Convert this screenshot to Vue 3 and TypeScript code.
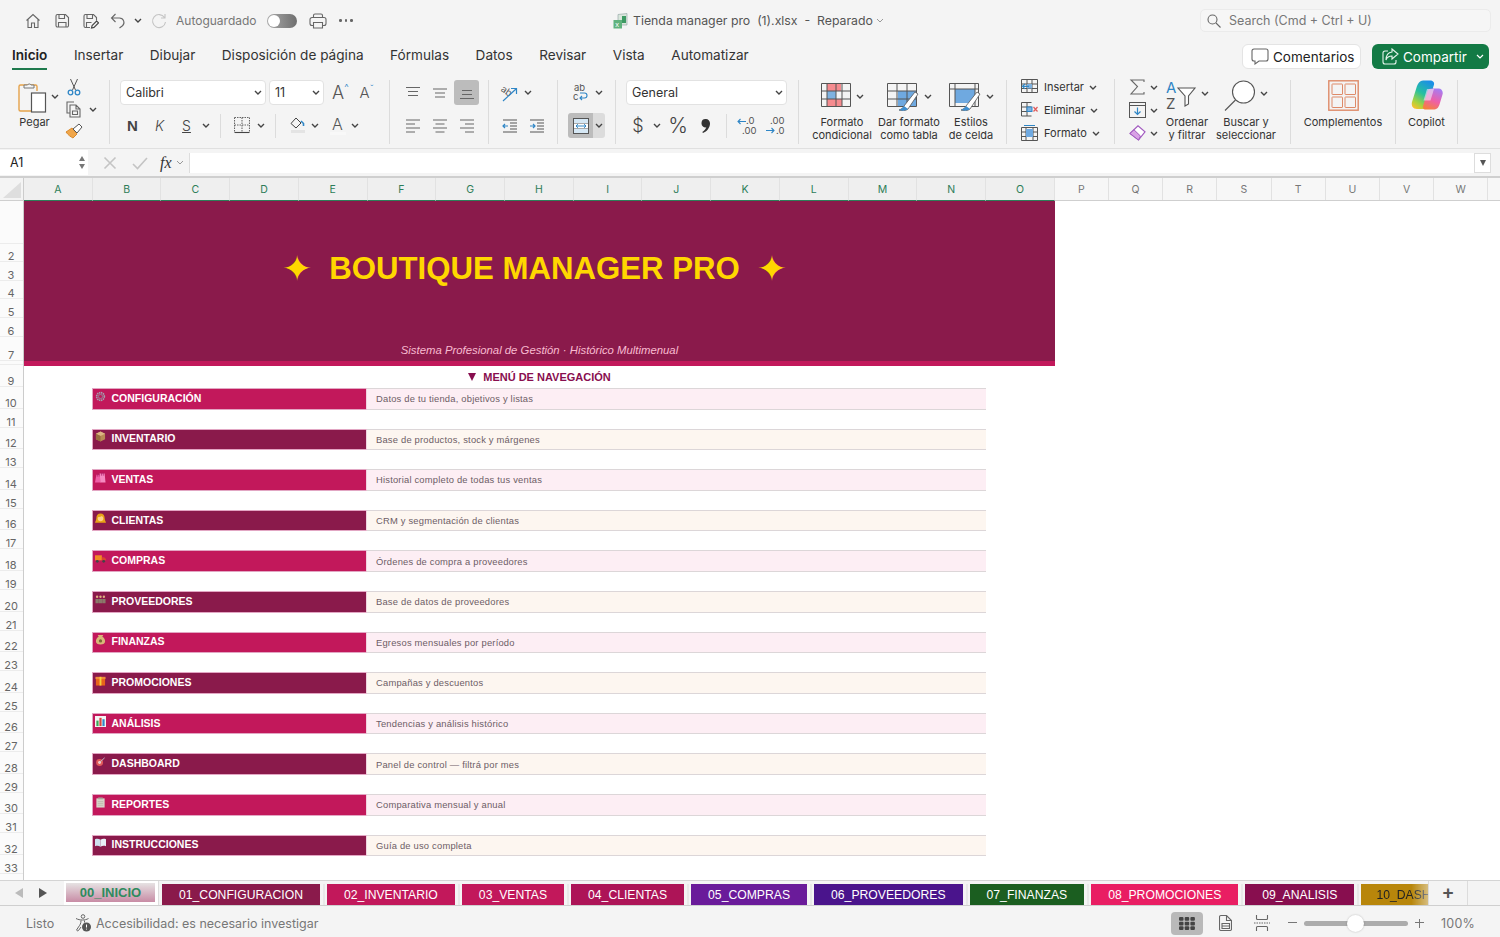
<template>
  <div class="app">
    <svg class="defs" width="0" height="0">
      <symbol id="chev" viewBox="0 0 8 5"><path d="M1 1l3 3 3-3" /></symbol>
    </svg>

    <!-- barra de título -->
    <div class="titlebar">
      <div class="qa">
        <svg class="ico home" width="16" height="16" viewBox="0 0 16 16"><path d="M1.500 7.500L8 1.500l6.500 6M3 6.500V14.500h3.500V10h3v4.500H13V6.500" /></svg>
        <svg class="ico sv" width="16" height="16" viewBox="0 0 16 16"><path d="M2 3a1.500 1.500 0 0 1 1.500-1.500h8L14.500 4.500v8a1.500 1.500 0 0 1-1.500 1.500H3.500A1.500 1.500 0 0 1 2 12.500zM5 2v3.500h5.500V2M4.500 14V9.500h7.500V14" /></svg>
        <svg class="ico sv2" width="17" height="16" viewBox="0 0 17 16"><path d="M2 3a1.500 1.500 0 0 1 1.500-1.500h8L14.500 4.500v3M8 14.500H3.500A1.500 1.500 0 0 1 2 13V3M5 2v3.500h5.500V2M4.500 14V9.500h5" /><path class="dark" d="M9.500 15l.6-2.500 4.500-4.500 1.900 1.900-4.500 4.500z" /></svg>
        <svg class="ico undo" width="16" height="16" viewBox="0 0 16 16"><path d="M5.500 1L1.500 5l4 4M1.500 5H9.500a4.500 4.500 0 0 1 3 7.800l-3 2.200" /></svg>
        <svg class="chev ch-undo"><use href="#chev" /></svg>
        <svg class="ico redo" width="16" height="16" viewBox="0 0 16 16"><path d="M13.500 4.500A6.500 6.500 0 1 0 14.500 9M14 1v4h-4" /></svg>
        <span class="autosave">Autoguardado</span>
        <span class="toggle"><i></i></span>
        <svg class="ico print" width="18" height="16" viewBox="0 0 18 16"><path d="M4.500 4.500V2.500a1.500 1.500 0 0 1 1.500-1.500h6a1.500 1.500 0 0 1 1.500 1.500v2M4.500 12.500H3A2 2 0 0 1 1 10.500V6.500a2 2 0 0 1 2-2h12a2 2 0 0 1 2 2v4a2 2 0 0 1-2 2h-1.500M4.500 9.500h9V15h-9z" /></svg>
        <span class="dots"><i></i><i></i><i></i></span>
      </div>
      <div class="doc">
        <svg class="xl" width="16" height="16" viewBox="0 0 16 16"><path d="M5 1.500l9-1v11.500H5z" fill="#d9e7dc" stroke="#9aa" stroke-width=".7" /><rect x="9" y="3" width="4" height="7" fill="#3d9a63" /><rect x="0.500" y="7" width="8.500" height="8.500" fill="#5fb27d" /><text x="2.300" y="14" font-size="7.500" fill="#fff" font-family="Liberation Sans">x</text></svg>
        <span class="doc-name">{{ docName }}</span>
        <svg class="chev light"><use href="#chev" /></svg>
      </div>
      <div class="search">
        <svg class="ico" width="14" height="14" viewBox="0 0 14 14"><circle cx="5.500" cy="5.500" r="4.500" /><path d="M9 9l4.500 4.500" /></svg>
        <span>Search (Cmd + Ctrl + U)</span>
      </div>
    </div>

    <!-- pestañas -->
    <div class="menubar">
      <span v-for="(t, i) in ribbonTabs" :key="t" class="mtab" :class="{ on: i === 0 }">{{ t }}</span>
      <div class="actions">
        <button class="btn-com">
          <svg class="ico" width="18" height="17" viewBox="0 0 18 17"><path d="M3 1h12a2 2 0 0 1 2 2v8a2 2 0 0 1-2 2H8l-4 3v-3H3a2 2 0 0 1-2-2V3a2 2 0 0 1 2-2z" /></svg>
          Comentarios
        </button>
        <button class="btn-share">
          <svg class="ico" width="17" height="17" viewBox="0 0 17 17"><path d="M6 3H3a2 2 0 0 0-2 2v9a2 2 0 0 0 2 2h9a2 2 0 0 0 2-2v-2M10 1l6 5-6 5V8C7 8 5 9 4 12c0-5 2-7.500 6-8z" /></svg>
          Compartir
          <svg class="chev white"><use href="#chev" /></svg>
        </button>
      </div>
    </div>

    <!-- cinta -->
    <div class="ribbon">
      <div class="grp g-clip">
        <div class="paste">
          <div class="paste-top">
            <svg width="30" height="32" viewBox="0 0 30 32" fill="none"><path d="M8 4H3.500A1.500 1.500 0 0 0 2 5.500v23A1.500 1.500 0 0 0 3.500 30H14" stroke="#e5a24a" stroke-width="1.400" /><path d="M8 4h10.500A1.500 1.500 0 0 1 20 5.500V10" stroke="#e5a24a" stroke-width="1.400" /><path d="M7 7V4h3.500a2 2 0 0 1 3.500 0H17v3z" fill="#f4f4f4" stroke="#777" /><rect x="14.500" y="12" width="14" height="19" fill="#fff" stroke="#555" stroke-width="1.200" /></svg>
            <svg class="chev"><use href="#chev" /></svg>
          </div>
          <span class="lbl">Pegar</span>
        </div>
        <div class="clip-side">
          <svg width="14" height="18" viewBox="0 0 14 18" fill="none"><path d="M3.500 1l5 11M10.500 1l-5 11" stroke="#555" /><circle cx="3.500" cy="14.500" r="2.300" stroke="#2f86c6" stroke-width="1.300" /><circle cx="10.500" cy="14.500" r="2.300" stroke="#2f86c6" stroke-width="1.300" /></svg>
          <div class="copy-row">
            <svg class="ico" width="18" height="17" viewBox="0 0 18 17"><path d="M9 1H2v11h3M5 4h6l4 4v8H5zM11 4v4h4M7.500 10h5v3.500h-5z" /></svg>
            <svg class="chev"><use href="#chev" /></svg>
          </div>
          <svg width="18" height="16" viewBox="0 0 18 16" fill="none"><path d="M1 9l6-4 5 6-4 4c-2-1-5-3-7-6z" fill="#f0a64a" stroke="#d98a2c" /><path d="M8 6l6-5 3 3-5 6z" fill="#fff" stroke="#555" /></svg>
        </div>
      </div>

      <div class="grp g-font">
        <div class="r1">
          <div class="select w-font"><span>Calibri</span><svg class="chev"><use href="#chev" /></svg></div>
          <div class="select w-size"><span>11</span><svg class="chev"><use href="#chev" /></svg></div>
          <span class="grow">A<sup>^</sup></span>
          <span class="shrink">A<sup>ˇ</sup></span>
        </div>
        <div class="r2 font-r2">
          <span class="b fmt bold">N</span>
          <span class="b fmt ital">K</span>
          <span class="b fmt under">S</span>
          <span class="c"><svg class="chev"><use href="#chev" /></svg></span>
          <i class="vsep m8"></i>
          <span class="b ml7">
            <svg class="ico" width="16" height="17" viewBox="0 0 16 17"><path stroke-dasharray="1.500 1" d="M.5.5h15v15M.5.5v15M8 .5v15M.5 8h15" /><path class="dark" d="M.5 15.500h15" /></svg>
          </span>
          <span class="c"><svg class="chev"><use href="#chev" /></svg></span>
          <i class="vsep m8"></i>
          <span class="b ml8">
            <svg width="16" height="17" viewBox="0 0 16 17" fill="none"><path d="M6 1L1 6.500l5 4.500 5-5z" stroke="#444" /><path d="M11 4l2.500 2.500V9" stroke="#2f86c6" stroke-width="1.600" /><rect x="1" y="13" width="14" height="3" fill="#e4e4e4" /></svg>
          </span>
          <span class="c nudge"><svg class="chev"><use href="#chev" /></svg></span>
          <span class="b fcolor">A<i></i></span>
          <span class="c nudge"><svg class="chev"><use href="#chev" /></svg></span>
        </div>
      </div>

      <div class="grp g-align">
        <div class="r1 tri">
          <span class="al"><svg class="ico" width="16" height="14" viewBox="0 0 16 14"><path d="M1 1.500h14M3 5.500h10M3 9.500h10" /></svg></span>
          <span class="al"><svg class="ico" width="16" height="14" viewBox="0 0 16 14"><path d="M1 3h14M3 7h10M3 11h10" /></svg></span>
          <span class="al act"><svg class="ico" width="16" height="14" viewBox="0 0 16 14"><path d="M3 4.500h10M3 8.500h10M1 12.500h14" /></svg></span>
        </div>
        <div class="r2 tri">
          <span class="al"><svg class="ico" width="16" height="14" viewBox="0 0 16 14"><path d="M1 1h14M1 5h9M1 9h14M1 13h9" /></svg></span>
          <span class="al"><svg class="ico" width="16" height="14" viewBox="0 0 16 14"><path d="M1 1h14M3.500 5h9M1 9h14M3.500 13h9" /></svg></span>
          <span class="al"><svg class="ico" width="16" height="14" viewBox="0 0 16 14"><path d="M1 1h14M6 5h9M1 9h14M6 13h9" /></svg></span>
        </div>
      </div>

      <div class="grp g-orient">
        <div class="r1">
          <span class="al">
            <svg width="20" height="18" viewBox="0 0 20 18" fill="none"><text x="0" y="9" font-size="9.500" fill="#555" font-family="Inter" transform="rotate(35 4 8)">ab</text><path d="M3 17L16 5M11 4.500h5.500V10" stroke="#2f86c6" stroke-width="1.200" /></svg>
          </span>
          <span class="c"><svg class="chev"><use href="#chev" /></svg></span>
        </div>
        <div class="r2 tri">
          <span class="al"><svg width="16" height="14" viewBox="0 0 16 14" fill="none"><path d="M8 4h7M8 7h7M8 10h7M1 13h14M1 1h14" stroke="#555" /><path d="M6 7H1M3 5L1 7l2 2" stroke="#2f86c6" stroke-width="1.200" /></svg></span>
          <span class="al"><svg width="16" height="14" viewBox="0 0 16 14" fill="none"><path d="M8 4h7M8 7h7M8 10h7M1 13h14M1 1h14" stroke="#555" /><path d="M1 7h5M4 5l2 2-2 2" stroke="#2f86c6" stroke-width="1.200" /></svg></span>
        </div>
      </div>

      <div class="grp g-wrap">
        <div class="r1">
          <span class="al">
            <svg width="17" height="19" viewBox="0 0 17 19" fill="none"><text x="2" y="8" font-size="9.500" fill="#555" font-family="Inter">ab</text><text x="1" y="17" font-size="9.500" fill="#555" font-family="Inter">c</text><path d="M8 15h4.500a2.500 2.500 0 0 0 0-5H8M10 13l-2 2 2 2" stroke="#2f86c6" stroke-width="1.100" /></svg>
          </span>
          <span class="c"><svg class="chev"><use href="#chev" /></svg></span>
        </div>
        <div class="r2 merge">
          <span class="al act2">
            <svg width="16" height="16" viewBox="0 0 16 16" fill="none"><rect x=".5" y=".5" width="15" height="15" fill="#d6e8f5" stroke="#555" /><path d="M.5 5.500h15M.5 10.500h15" stroke="#555" /><rect x="1" y="5.500" width="14" height="5" fill="#fff" /><path d="M3 8h10M5 6.200L3 8l2 1.800M11 6.200L13 8l-2 1.800" stroke="#2f86c6" /></svg>
          </span>
          <span class="c act3"><svg class="chev"><use href="#chev" /></svg></span>
        </div>
      </div>

      <div class="grp g-num">
        <div class="r1">
          <div class="select w-gen"><span>General</span><svg class="chev"><use href="#chev" /></svg></div>
        </div>
        <div class="r2">
          <span class="b sym">$</span>
          <span class="c small-c"><svg class="chev"><use href="#chev" /></svg></span>
          <span class="b sym pct">%</span>
          <span class="b comma">
            <svg width="10" height="14" viewBox="0 0 10 14" fill="#333"><path d="M4.500 0a4.300 4.300 0 0 1 4.500 4.500C9 8.500 6 12.500 2 14l-.7-1c2-1.200 3.500-3 4-4.700A4 4 0 0 1 .500 4.300 4.200 4.200 0 0 1 4.500 0z" /></svg>
          </span>
          <i class="vsep num-sep"></i>
          <span class="b">
            <svg width="20" height="20" viewBox="0 0 20 20" fill="none"><text x="9" y="8" font-size="9.500" fill="#555" font-family="Inter">.0</text><text x="5" y="18" font-size="9.500" fill="#555" font-family="Inter">.00</text><path d="M9 5.500H1M3.500 3L1 5.500 3.500 8" stroke="#2f86c6" stroke-width="1.100" /></svg>
          </span>
          <span class="b">
            <svg width="20" height="20" viewBox="0 0 20 20" fill="none"><text x="5" y="8" font-size="9.500" fill="#555" font-family="Inter">.00</text><text x="11" y="18" font-size="9.500" fill="#555" font-family="Inter">.0</text><path d="M1 14.500h8M6.500 12L9 14.500 6.500 17" stroke="#2f86c6" stroke-width="1.100" /></svg>
          </span>
        </div>
      </div>

      <div class="grp g-styles">
        <div class="big">
          <div class="big-top">
            <svg width="30" height="24" viewBox="0 0 30 24" fill="none"><path d="M6 1h14v7H6zM6 16h15v7H6z" fill="#f58b8f" /><path d="M6 8h9v8H6z" fill="#7fb2e0" /><path d="M.5.5h29v23H.5zM.5 8h29M.5 16h29M6 .5v23M15 .5v23M21 .5v23" stroke="#555" /></svg>
            <svg class="chev"><use href="#chev" /></svg>
          </div>
          <span class="lbl">Formato<br />condicional</span>
        </div>
        <div class="big">
          <div class="big-top">
            <svg width="32" height="28" viewBox="0 0 32 28" fill="none"><path d="M11 8h19v15H11z" fill="#6fa9e0" /><path d="M.5 .5h29v23H.5zM.5 8h29M.5 16h29M10 .5v23M20 .5v23" stroke="#555" /><path d="M17 23L28 9l3 2-10 15c-2 2-7 2-9 1 3-1 4-2 5-4z" fill="#fff" stroke="#555" stroke-width=".8" /><path d="M12 27c3-1 4-3 5-4l4 3c-2 2-7 2-9 1z" fill="#3f8fd0" /></svg>
            <svg class="chev"><use href="#chev" /></svg>
          </div>
          <span class="lbl">Dar formato<br />como tabla</span>
        </div>
        <div class="big">
          <div class="big-top">
            <svg width="32" height="28" viewBox="0 0 32 28" fill="none"><path d="M6 6h20v14H6z" fill="#6fa9e0" /><path d="M.5 .5h29v23H.5zM.5 6h29M6 .5v23M26 .5v23" stroke="#555" /><path d="M17 23L28 9l3 2-10 15c-2 2-7 2-9 1 3-1 4-2 5-4z" fill="#fff" stroke="#555" stroke-width=".8" /><path d="M12 27c3-1 4-3 5-4l4 3c-2 2-7 2-9 1z" fill="#3f8fd0" /></svg>
            <svg class="chev"><use href="#chev" /></svg>
          </div>
          <span class="lbl">Estilos<br />de celda</span>
        </div>
      </div>

      <div class="grp g-cells">
        <div class="cell-row">
          <svg width="17" height="16" viewBox="0 0 17 16" fill="none"><path d="M.5 .5h16v13H.5zM.5 5h16M.5 9.500h16M6 .5v13M11 .5v13" stroke="#555" /><rect x="6" y="5" width="5" height="4.500" fill="#7fb2e0" /><path d="M8 7.300H1.500M4 4.800L1.500 7.300 4 9.800" stroke="#2f86c6" stroke-width="1.200" /></svg>
          <span>Insertar</span><svg class="chev"><use href="#chev" /></svg>
        </div>
        <div class="cell-row">
          <svg width="17" height="16" viewBox="0 0 17 16" fill="none"><path d="M.5 .5h10M.5 5h10M.5 9.500h10M.5 14h10M.5.5v13.500M6 .5v13.500" stroke="#555" /><rect x="6" y="5" width="5" height="4.500" fill="#7fb2e0" stroke="#2f86c6" /><path d="M12.500 5l4 4.500M16.500 5l-4 4.500" stroke="#e05a5a" stroke-width="1.200" /></svg>
          <span>Eliminar</span><svg class="chev"><use href="#chev" /></svg>
        </div>
        <div class="cell-row">
          <svg width="17" height="16" viewBox="0 0 17 16" fill="none"><path d="M.5 2.500h16v13H.5zM.5 7h16M.5 11.500h16M5 2.500v13M12 2.500v13" stroke="#555" /><rect x="5" y="4" width="7" height="8" fill="#6fa9e0" /><path d="M3 .5h11" stroke="#2f86c6" /></svg>
          <span>Formato</span><svg class="chev"><use href="#chev" /></svg>
        </div>
      </div>

      <div class="grp g-edit">
        <div class="edit-col">
          <div class="edit-row">
            <svg class="ico" width="17" height="16" viewBox="0 0 17 16"><path d="M15 3V1H2l6.500 6.500L2 15h13v-2" /></svg>
            <svg class="chev"><use href="#chev" /></svg>
          </div>
          <div class="edit-row">
            <svg width="17" height="16" viewBox="0 0 17 16" fill="none"><rect x=".5" y=".5" width="16" height="15" stroke="#555" /><path d="M.5 3.500h16" stroke="#555" /><path d="M8.500 5.500v7M5.500 9.500l3 3 3-3" stroke="#2f86c6" stroke-width="1.200" /></svg>
            <svg class="chev"><use href="#chev" /></svg>
          </div>
          <div class="edit-row">
            <svg width="17" height="16" viewBox="0 0 17 16" fill="none"><path d="M1 8.500L9 .8l7 6L9.500 15z" fill="#fff" stroke="#a25bc0" stroke-width="1.200" /><path d="M5 4.800l6.500 6.300L9.500 15 1 8.500z" fill="#d9a2e6" stroke="#a25bc0" /></svg>
            <svg class="chev"><use href="#chev" /></svg>
          </div>
        </div>
        <div class="big sort">
          <div class="big-top">
            <svg width="32" height="30" viewBox="0 0 32 30" fill="none"><text x="1" y="13" font-size="15" fill="#2f86c6" font-family="Inter">A</text><text x="1" y="29" font-size="15" fill="#555" font-family="Inter">Z</text><path d="M13 8h17l-6.500 8v8l-3.500 2V16z" fill="#fff" stroke="#555" stroke-width="1.100" /></svg>
            <svg class="chev"><use href="#chev" /></svg>
          </div>
          <span class="lbl">Ordenar<br />y filtrar</span>
        </div>
        <div class="big find">
          <div class="big-top">
            <svg width="32" height="31" viewBox="0 0 32 31" fill="none"><circle cx="19.500" cy="12" r="11" fill="#fff" stroke="#555" stroke-width="1.100" /><path d="M11.500 20L1 30.500" stroke="#555" stroke-width="1.100" /></svg>
            <svg class="chev"><use href="#chev" /></svg>
          </div>
          <span class="lbl">Buscar y<br />seleccionar</span>
        </div>
      </div>

      <div class="grp g-comp">
        <div class="big wide">
          <div class="big-top">
            <svg width="31" height="31" viewBox="0 0 31 31" fill="none"><rect x=".8" y=".8" width="29.400" height="29.400" stroke="#de8a68" stroke-width="1.400" /><rect x="4" y="4" width="10.500" height="10.500" rx=".5" stroke="#de8a68" /><rect x="17" y="4" width="10.500" height="10.500" rx=".5" stroke="#de8a68" /><rect x="4" y="17" width="10.500" height="10.500" rx=".5" stroke="#de8a68" /><rect x="17" y="17" width="10.500" height="10.500" rx=".5" stroke="#de8a68" /></svg>
          </div>
          <span class="lbl">Complementos</span>
        </div>
      </div>

      <div class="grp g-cop">
        <div class="big wide">
          <div class="big-top">
            <svg width="32" height="30" viewBox="0 0 32 30">
              <defs>
                <linearGradient id="cpA" x1=".7" y1="0" x2=".2" y2="1"><stop offset="0" stop-color="#1c8fe6" /><stop offset=".45" stop-color="#26c0a0" /><stop offset=".8" stop-color="#a6d33e" /><stop offset="1" stop-color="#f5c22e" /></linearGradient>
                <linearGradient id="cpB" x1=".7" y1="0" x2=".3" y2="1"><stop offset="0" stop-color="#a77cf2" /><stop offset=".55" stop-color="#ee5fa8" /><stop offset="1" stop-color="#f5803e" /></linearGradient>
              </defs>
              <path d="M12 .5h7c3 0 4.500 2 4 4L17 24c-1 3-3 5-6 5H6C2 29 0 26 1 22l5-16c1-3 3-5.500 6-5.500z" fill="url(#cpA)" />
              <path d="M14 29.500h8c4 0 5.500-2 6.500-5l3-10c1-3-1-6-4-6h-7c-2 0-3.500 1-4 3L12 26c-.5 2 0 3.500 2 3.500z" fill="url(#cpB)" />
              <path d="M16 9h7l-3.500 11.500h-7z" fill="#f4e6f6" opacity=".6" />
            </svg>
          </div>
          <span class="lbl">Copilot</span>
        </div>
      </div>
    </div>

    <!-- barra de fórmulas -->
    <div class="fbar">
      <div class="namebox">
        <span>A1</span>
        <span class="spin"><i class="up"></i><i class="down"></i></span>
      </div>
      <div class="fbtns">
        <svg class="fb-x" width="14" height="14" viewBox="0 0 14 14"><path d="M1.500 1.500l11 11M12.500 1.500l-11 11" /></svg>
        <svg class="fb-x" width="16" height="14" viewBox="0 0 16 14"><path d="M1 8l4.500 4.500L15 2" /></svg>
        <span class="fx">fx</span>
        <svg class="chev light"><use href="#chev" /></svg>
      </div>
      <div class="finput"></div>
      <div class="fdrop"><i></i></div>
    </div>

    <!-- encabezados de columna -->
    <div class="colheads">
      <div class="corner"><i></i></div>
      <div v-for="c in selectedCols" :key="c" class="col sel">{{ c }}</div>
      <div v-for="c in otherCols" :key="c" class="col">{{ c }}</div>
    </div>

    <!-- hoja -->
    <div class="sheet">
      <div class="rowheads">
        <div v-for="r in rows" :key="r.key" class="rowh" :style="{ height: r.h + 'px' }">{{ r.label }}</div>
      </div>
      <div class="content">
        <div class="banner">
          <div class="banner-title"><span class="star">✦</span>BOUTIQUE MANAGER PRO<span class="star">✦</span></div>
          <div class="banner-sub">Sistema Profesional de Gestión · Histórico Multimenual</div>
        </div>
        <div class="nav-title"><span class="tri-down"></span>MENÚ DE NAVEGACIÓN</div>
        <div class="nav">
          <div v-for="(item, i) in navItems" :key="item.name" class="nav-row">
            <div class="nav-label" :class="i % 2 ? 'dark-row' : 'pink-row'">
              <svg class="emoji" width="11" height="11" viewBox="0 0 12 12">
                <template v-if="item.icon === 'gear'">
                  <circle cx="6" cy="6" r="4.200" fill="none" stroke="#a2a2b0" stroke-width="1.800" stroke-dasharray="1.500 .7" />
                  <circle cx="6" cy="6" r="2.300" fill="none" stroke="#8c8c9a" stroke-width="1" />
                </template>
                <template v-else-if="item.icon === 'box'">
                  <path d="M6 .5l5 2.500v6L6 11.500 1 9V3z" fill="#b98a55" />
                  <path d="M1 3l5 2.500L11 3 6 .5z" fill="#dcb583" />
                  <path d="M6 5.500v6L1 9V3z" fill="#9a6f3f" />
                </template>
                <template v-else-if="item.icon === 'bags'">
                  <path d="M0 11.500L1.500 3h4l1 8.500z" fill="#ef5fa7" />
                  <path d="M5 1.500h5.500l1 10H6z" fill="#f58ac0" />
                  <path d="M7 4V1h2v3" fill="none" stroke="#b01e68" stroke-width=".8" />
                  <path d="M2.500 5V2.500h2V5" fill="none" stroke="#b01e68" stroke-width=".8" />
                </template>
                <template v-else-if="item.icon === 'woman'">
                  <path d="M6 .5c3 0 4.500 2 4.500 5 0 2 1 3.500 1.500 5H0c.5-1.500 1.500-3 1.500-5 0-3 1.500-5 4.500-5z" fill="#e8a317" />
                  <circle cx="6" cy="6" r="3" fill="#ffd08a" />
                  <path d="M3 4.500C5 4.500 7 4 8 3c.5 1 1 1.500 1 2V3.500L6 2 3 3.500z" fill="#e8a317" />
                </template>
                <template v-else-if="item.icon === 'truck'">
                  <rect x="0" y="2.500" width="7.500" height="5.500" fill="#f08a24" />
                  <path d="M7.500 4.500h2.500L12 6.500V8H7.500z" fill="#d9452f" />
                  <circle cx="2.500" cy="9" r="1.500" fill="#444" />
                  <circle cx="9.500" cy="9" r="1.500" fill="#444" />
                </template>
                <template v-else-if="item.icon === 'people'">
                  <circle cx="2.300" cy="3" r="1.300" fill="#e0b080" />
                  <circle cx="6" cy="3" r="1.300" fill="#e0b080" />
                  <circle cx="9.700" cy="3" r="1.300" fill="#e0b080" />
                  <path d="M.5 10V5.500h3.500V10zM4.200 10V5.500h3.600V10zM8 10V5.500h3.500V10z" fill="#8a7a6a" />
                </template>
                <template v-else-if="item.icon === 'money'">
                  <path d="M4 3L3 1h6L8 3c2 1 3 3 3 5 0 2.500-2 3.500-5 3.500S1 10.500 1 8c0-2 1-4 3-5z" fill="#d9b779" />
                  <circle cx="6" cy="7.500" r="1.800" fill="#7a6a35" />
                </template>
                <template v-else-if="item.icon === 'gift'">
                  <rect x="1" y="3.500" width="10" height="8" fill="#e8641b" />
                  <rect x=".5" y="2" width="11" height="2.500" fill="#f08a3a" />
                  <rect x="5" y="2" width="2" height="9.500" fill="#f6cf3c" />
                </template>
                <template v-else-if="item.icon === 'chart'">
                  <rect x="0" y="0" width="12" height="12" fill="#f4f4f4" />
                  <rect x="1.500" y="5" width="2.400" height="6" fill="#3aa655" />
                  <rect x="4.800" y="2" width="2.400" height="9" fill="#d9453f" />
                  <rect x="8.100" y="3.500" width="2.400" height="7.500" fill="#2f86c6" />
                </template>
                <template v-else-if="item.icon === 'dart'">
                  <circle cx="5" cy="7" r="3.800" fill="#e05a5a" />
                  <circle cx="5" cy="7" r="1.600" fill="#f6d0d0" />
                  <path d="M5 7l5.500-5" stroke="#c4c4cc" stroke-width="1" />
                </template>
                <template v-else-if="item.icon === 'clipboard'">
                  <rect x="1.500" y="1.500" width="9" height="10" fill="#d8d4c8" />
                  <rect x="3.500" y=".5" width="5" height="2" fill="#a8a49a" />
                  <path d="M3 5h6M3 7h6M3 9h6" stroke="#b5b1a6" stroke-width=".7" />
                </template>
                <template v-else>
                  <path d="M0 2.500c2-.7 4-.7 6 .5v7.500c-2-1.200-4-1.200-6-.5z" fill="#cfe0ef" />
                  <path d="M12 2.500c-2-.7-4-.7-6 .5v7.500c2-1.200 4-1.200 6-.5z" fill="#e8f0f7" />
                </template>
              </svg>
              <span>{{ item.name }}</span>
            </div>
            <div class="nav-desc" :class="i % 2 ? 'cream' : 'rose'">{{ item.desc }}</div>
          </div>
        </div>
      </div>
    </div>

    <!-- pestañas de hoja -->
    <div class="tabbar">
      <div class="tab-nav">
        <i class="arr left"></i>
        <i class="arr right"></i>
      </div>
      <div class="tab-active"><span>00_INICIO</span></div>
      <div class="tabs">
        <div v-for="t in sheets" :key="t.name" class="tab" :class="{ last: t.last }" :style="{ background: t.color }">{{ t.name }}</div>
      </div>
      <div class="tab-add">+</div>
    </div>

    <!-- estado -->
    <div class="status">
      <span class="listo">Listo</span>
      <svg width="17" height="18" viewBox="0 0 17 18" fill="none" class="a11y"><circle cx="8" cy="2.500" r="1.800" stroke="#666" /><path d="M1 4.500c2 1 4 1.500 6.500 1.500s4-.5 6-1.500M6 6.500c0 3-1 4.500-2.500 6.500l-2 3c.5 1 1.500 1 2 .5L6 13M9.500 6.500v2" stroke="#666" /><circle cx="11.500" cy="13" r="4.500" fill="#555" /><path d="M11.500 10.500v3M11.500 14.700v.8" stroke="#fff" /></svg>
      <span class="a11y-text">Accesibilidad: es necesario investigar</span>
      <div class="status-right">
        <span class="view-on">
          <svg width="16" height="13" viewBox="0 0 16 13" fill="#444"><rect x="0" y="0" width="4.500" height="3.700" rx="1" /><rect x="5.700" y="0" width="4.500" height="3.700" rx="1" /><rect x="11.400" y="0" width="4.500" height="3.700" rx="1" /><rect x="0" y="4.700" width="4.500" height="3.700" rx="1" /><rect x="5.700" y="4.700" width="4.500" height="3.700" rx="1" /><rect x="11.400" y="4.700" width="4.500" height="3.700" rx="1" /><rect x="0" y="9.300" width="4.500" height="3.700" rx="1" /><rect x="5.700" y="9.300" width="4.500" height="3.700" rx="1" /><rect x="11.400" y="9.300" width="4.500" height="3.700" rx="1" /></svg>
        </span>
        <svg class="ico v-page" width="13" height="16" viewBox="0 0 13 16"><path d="M1.500.5h6l5 5V14a1.500 1.500 0 0 1-1.500 1.500H2A1.500 1.500 0 0 1 .5 14V2A1.500 1.500 0 0 1 2 .5zM7.500.5v5h5M3 8.500h7.500v5H3zM3 11h7.500" /></svg>
        <svg class="ico v-break" width="16" height="16" viewBox="0 0 16 16"><path d="M2.500 0v3.500a1 1 0 0 0 1 1h9a1 1 0 0 0 1-1V0M2.500 16v-3.500a1 1 0 0 1 1-1h9a1 1 0 0 1 1 1V16" /><path stroke-dasharray="1.500 1" d="M0 8h16" /></svg>
        <span class="z-minus"></span>
        <div class="slider"><i></i></div>
        <span class="z-plus"></span>
        <span class="zoom-val">100%</span>
      </div>
    </div>
  </div>
</template>

<script setup lang="ts">
interface NavItem {
  name: string
  desc: string
  icon: string
}

interface Sheet {
  name: string
  color: string
  last?: boolean
}

const docName = 'Tienda manager pro  (1).xlsx  -  Reparado'

const ribbonTabs = ['Inicio', 'Insertar', 'Dibujar', 'Disposición de página', 'Fórmulas', 'Datos', 'Revisar', 'Vista', 'Automatizar']

const selectedCols = 'ABCDEFGHIJKLMNO'.split('')
const otherCols = 'PQRSTUVW'.split('')

const navItems: NavItem[] = [
  { name: 'CONFIGURACIÓN', desc: 'Datos de tu tienda, objetivos y listas', icon: 'gear' },
  { name: 'INVENTARIO', desc: 'Base de productos, stock y márgenes', icon: 'box' },
  { name: 'VENTAS', desc: 'Historial completo de todas tus ventas', icon: 'bags' },
  { name: 'CLIENTAS', desc: 'CRM y segmentación de clientas', icon: 'woman' },
  { name: 'COMPRAS', desc: 'Órdenes de compra a proveedores', icon: 'truck' },
  { name: 'PROVEEDORES', desc: 'Base de datos de proveedores', icon: 'people' },
  { name: 'FINANZAS', desc: 'Egresos mensuales por período', icon: 'money' },
  { name: 'PROMOCIONES', desc: 'Campañas y descuentos', icon: 'gift' },
  { name: 'ANÁLISIS', desc: 'Tendencias y análisis histórico', icon: 'chart' },
  { name: 'DASHBOARD', desc: 'Panel de control — filtrá por mes', icon: 'dart' },
  { name: 'REPORTES', desc: 'Comparativa mensual y anual', icon: 'clipboard' },
  { name: 'INSTRUCCIONES', desc: 'Guía de uso completa', icon: 'book' },
]

const sheets: Sheet[] = [
  { name: '01_CONFIGURACION', color: '#8a1a4b' },
  { name: '02_INVENTARIO', color: '#c2185b' },
  { name: '03_VENTAS', color: '#c2185b' },
  { name: '04_CLIENTAS', color: '#ad1457' },
  { name: '05_COMPRAS', color: '#6a1b9a' },
  { name: '06_PROVEEDORES', color: '#4a148c' },
  { name: '07_FINANZAS', color: '#1b5e20' },
  { name: '08_PROMOCIONES', color: '#e91e63' },
  { name: '09_ANALISIS', color: '#880e4f' },
  { name: '10_DASHBOARD', color: '#b8860b', last: true },
]

// filas del encabezado: la 1 y la 8 no llevan número visible
const rows: { key: string; label: string; h: number }[] = [
  { key: 'r1', label: '', h: 43 },
  { key: 'r2', label: '2', h: 18 },
  { key: 'r3', label: '3', h: 18.7 },
  { key: 'r4', label: '4', h: 18.7 },
  { key: 'r5', label: '5', h: 18.7 },
  { key: 'r6', label: '6', h: 18.9 },
  { key: 'r7', label: '7', h: 24 },
  { key: 'r8', label: '', h: 4 },
  { key: 'r9', label: '9', h: 22 },
]
for (let n = 10; n <= 33; n++) {
  rows.push({ key: 'r' + n, label: String(n), h: n % 2 ? 19 : 21.6 })
}
</script>

<style scoped>
.app {
  width: 1500px;
  height: 937px;
  overflow: hidden;
  background: #f4f4f4;
  color: #444;
  font-family: Inter, "Noto Sans", sans-serif;
  display: flex;
  flex-direction: column;
}

.defs {
  position: absolute;
}

.ico {
  fill: none;
  stroke: #666;
  stroke-width: 1.1;
  flex: none;
}

.ico .dark {
  stroke: #444;
}

.chev {
  width: 8px;
  height: 5px;
  fill: none;
  stroke: #444;
  stroke-width: 1.4;
  flex: none;
}

.chev.light {
  stroke: #999;
  stroke-width: 1;
}

.chev.white {
  stroke: #fff;
  stroke-width: 1.2;
}

/* título */
.titlebar {
  height: 40px;
  display: flex;
  align-items: center;
  flex: none;
  padding-top: 1px;
  box-sizing: border-box;
}

.qa {
  width: 613px;
  padding-left: 25px;
  box-sizing: border-box;
  display: flex;
  align-items: center;
  flex: none;
}

.sv {
  margin-left: 13px;
}

.sv2 {
  margin-left: 12px;
}

.undo {
  margin-left: 11px;
}

.ch-undo {
  margin-left: 8px;
}

.redo {
  margin-left: 9px;
  stroke: #c4c4c4;
}

.autosave {
  margin-left: 9px;
  font-size: 12px;
  color: #777;
  width: 91px;
  flex: none;
}

.toggle {
  width: 30px;
  height: 14px;
  border-radius: 8px;
  background: linear-gradient(90deg, #aaa, #6f6f6f);
  display: block;
  position: relative;
  flex: none;
}

.toggle i {
  position: absolute;
  left: 1px;
  top: 1px;
  width: 12px;
  height: 12px;
  border-radius: 50%;
  background: #fff;
}

.print {
  margin-left: 12px;
}

.dots {
  margin-left: 12px;
  display: flex;
  gap: 3px;
}

.dots i {
  width: 2.500px;
  height: 2.500px;
  background: #666;
  border-radius: 50%;
}

.doc {
  width: 587px;
  flex: none;
  display: flex;
  align-items: center;
  font-size: 12.300px;
  color: #555;
}

.xl {
  margin-right: 4px;
}

.doc-name {
  white-space: pre;
  margin-right: 3px;
}

.search {
  width: 291px;
  height: 23px;
  box-sizing: border-box;
  border: 1px solid #ebebeb;
  border-radius: 5px;
  background: #f6f6f6;
  display: flex;
  align-items: center;
  padding-left: 6px;
  gap: 8px;
  font-size: 12.500px;
  color: #777;
  flex: none;
}

/* pestañas */
.menubar {
  height: 30px;
  display: flex;
  align-items: flex-start;
  padding-left: 12px;
  gap: 26.500px;
  flex: none;
}

.mtab {
  font-size: 13.600px;
  line-height: 30px;
  color: #333;
  height: 28px;
  white-space: nowrap;
}

.mtab.on {
  font-weight: 600;
  color: #222;
  border-bottom: 2px solid #1f7a4d;
}

.actions {
  margin-left: auto;
  display: flex;
  gap: 11px;
  padding: 4px 11px 0 0;
}

.btn-com,
.btn-share {
  height: 25px;
  border-radius: 6px;
  font: inherit;
  font-size: 13.500px;
  display: flex;
  align-items: center;
  padding: 0;
  box-sizing: border-box;
}

.btn-com {
  width: 119px;
  background: #fff;
  border: 1px solid #e4e4e4;
  color: #222;
  padding-left: 8px;
  gap: 4px;
}

.btn-share {
  width: 117px;
  background: #137a45;
  border: 0;
  color: #fff;
  padding-left: 10px;
  gap: 4px;
}

.btn-share .ico {
  stroke: #e6f4ec;
}

.btn-share .chev {
  margin-left: 5px;
}

/* cinta */
.ribbon {
  height: 78px;
  flex: none;
  display: flex;
  padding-top: 10px;
  box-sizing: border-box;
}

.grp {
  height: 64px;
  border-right: 1px solid #dcdcdc;
  box-sizing: border-box;
  flex: none;
}

.lbl {
  font-size: 11px;
  line-height: 13px;
  color: #333;
  text-align: center;
  white-space: nowrap;
  display: block;
}

.r1,
.r2 {
  display: flex;
  align-items: center;
  height: 25px;
}

.r2 {
  margin-top: 8px;
}

.b {
  width: 27px;
  height: 25px;
  display: flex;
  align-items: center;
  justify-content: center;
  flex: none;
}

.c {
  width: 12px;
  display: flex;
  align-items: center;
  justify-content: center;
  flex: none;
}

.vsep {
  width: 1px;
  height: 24px;
  background: #dcdcdc;
  flex: none;
}

.select {
  height: 25px;
  box-sizing: border-box;
  background: #fff;
  border: 1px solid #e2e2e2;
  border-radius: 4px;
  display: flex;
  align-items: center;
  justify-content: space-between;
  padding: 0 3px 0 5px;
  font-size: 12.500px;
  color: #333;
  flex: none;
}

.g-clip {
  width: 110px;
  padding-left: 17px;
  display: flex;
}

.paste {
  width: 45px;
  flex: none;
}

.paste-top {
  display: flex;
  align-items: center;
  gap: 4px;
  height: 33px;
  margin-bottom: 2px;
}

.paste .lbl {
  width: 35px;
  margin-top: 3px;
}

.clip-side {
  display: flex;
  flex-direction: column;
  align-items: flex-start;
  margin-left: 3px;
  margin-top: -2px;
  gap: 5px;
}

.clip-side > svg:first-child {
  margin-left: 2px;
}

.copy-row {
  display: flex;
  align-items: center;
  gap: 6px;
}

.g-font {
  width: 280px;
  padding-left: 10px;
}

.w-font {
  width: 146px;
}

.w-size {
  width: 55px;
  margin-left: 3px;
}

.grow,
.shrink {
  font-size: 18px;
  font-weight: 300;
  color: #555;
  flex: none;
  display: flex;
}

.grow {
  margin-left: 8px;
}

.shrink {
  margin-left: 11px;
  font-size: 15px;
}

.grow sup,
.shrink sup {
  font-size: 10px;
  line-height: 10px;
  color: #2f86c6;
}

.font-r2 {
  margin-left: -1px;
}

.fmt {
  font-size: 14px;
  color: #444;
}

.bold {
  font-family: "Liberation Sans", sans-serif;
  font-size: 15px;
  font-weight: 700;
}

.ital {
  font-style: italic;
  font-weight: 300;
}

.under {
  text-decoration: underline;
  font-weight: 300;
}

.m8 {
  margin-left: 8px;
}

.ml7 {
  margin-left: 7px;
}

.ml8 {
  margin-left: 8px;
}

.nudge {
  margin-left: -2px;
}

.fcolor {
  font-size: 16px;
  font-weight: 300;
  color: #555;
  flex-direction: column;
  margin-left: 3px;
  line-height: 15px;
}

.fcolor i {
  width: 16px;
  height: 3px;
  background: #f8f8f8;
}

.g-align {
  width: 99px;
  padding-left: 10px;
}

.tri {
  gap: 2px;
}

.al {
  width: 25px;
  height: 25px;
  display: flex;
  align-items: center;
  justify-content: center;
  flex: none;
  border-radius: 3px;
}

.act {
  background: #bcbcbc;
}

.g-orient {
  width: 69px;
  padding-left: 8px;
}

.g-wrap {
  width: 58px;
  padding-left: 10px;
}

.act2 {
  background: #bcbcbc;
  border-radius: 3px 0 0 3px;
}

.act3 {
  height: 25px;
  background: #dcdcdc;
  border-radius: 0 3px 3px 0;
}

.g-num {
  width: 183px;
  padding-left: 10px;
}

.w-gen {
  width: 161px;
}

.sym {
  width: 24px;
  font-size: 18px;
  font-weight: 300;
  color: #444;
}

.small-c {
  margin-left: 1px;
}

.pct {
  margin-left: 3px;
  font-size: 21px;
}

.comma {
  width: 24px;
  margin-left: 4px;
}

.num-sep {
  margin: 0 8px;
}

.g-num .r2 .b:nth-last-child(-n + 2) {
  width: 24px;
}

.g-num .r2 .b:last-child {
  margin-left: 4px;
}

.g-styles {
  width: 208px;
  padding-left: 12px;
  display: flex;
}

.big {
  width: 62px;
  flex: none;
  display: flex;
  flex-direction: column;
  align-items: center;
}

.big:nth-child(2) {
  width: 72px;
}

.g-styles .big:nth-child(3) {
  width: 52px;
}

.big-top {
  height: 32px;
  margin-bottom: 4px;
  display: flex;
  align-items: flex-start;
  gap: 5px;
}

.big-top .chev {
  margin-top: 11px;
}

.g-styles .big-top {
  padding-top: 3px;
  box-sizing: border-box;
}

.g-cells {
  width: 108px;
  padding-left: 14px;
  display: flex;
  flex-direction: column;
  gap: 7px;
  margin-top: -1px;
  height: 65px;
}

.cell-row {
  display: flex;
  align-items: center;
  height: 16px;
  font-size: 11px;
  color: #333;
}

.cell-row span {
  margin: 0 5px 0 6px;
}

.g-edit {
  width: 176px;
  padding-left: 14px;
  display: flex;
}

.edit-col {
  display: flex;
  flex-direction: column;
  gap: 7px;
  width: 29px;
  flex: none;
  margin-top: -1px;
}

.edit-row {
  display: flex;
  align-items: center;
  gap: 4px;
  height: 16px;
}

.sort {
  width: 58px;
  margin-left: 0;
}

.big.sort:nth-child(2) {
  width: 58px;
}

.find {
  width: 60px;
}

.sort .big-top,
.find .big-top {
  gap: 4px;
}

.g-comp {
  width: 105px;
}

.g-cop {
  width: 62px;
}

.wide {
  width: 100%;
}

/* fórmulas */
.fbar {
  height: 30px;
  flex: none;
  display: flex;
  align-items: center;
  border-top: 1px solid #e0e0e0;
  border-bottom: 2px solid #cfcfcf;
  box-sizing: border-box;
}

.namebox {
  width: 88px;
  height: 25px;
  background: #fff;
  display: flex;
  align-items: center;
  justify-content: space-between;
  padding: 0 1px 0 10px;
  box-sizing: border-box;
  font-size: 12.500px;
  color: #222;
  flex: none;
}

.spin {
  display: flex;
  flex-direction: column;
  gap: 3px;
  width: 10px;
  align-items: center;
}

.spin i {
  width: 0;
  height: 0;
  border-left: 3.500px solid transparent;
  border-right: 3.500px solid transparent;
}

.spin .up {
  border-bottom: 5px solid #777;
}

.spin .down {
  border-top: 5px solid #777;
}

.fbtns {
  width: 101px;
  flex: none;
  display: flex;
  align-items: center;
  padding-left: 15px;
  box-sizing: border-box;
}

.fb-x {
  fill: none;
  stroke: #c4c4c4;
  stroke-width: 1.600;
  margin-right: 15px;
}

.fx {
  font-family: "Liberation Serif", serif;
  font-style: italic;
  font-size: 16px;
  color: #333;
  margin: 0 4px 0 -3px;
}

.finput {
  flex: 1;
  height: 20px;
  background: #fff;
  border-left: 1px solid #ddd;
}

.fdrop {
  width: 17px;
  height: 20px;
  background: #fff;
  border: 1px solid #ddd;
  box-sizing: border-box;
  margin-right: 9px;
  display: flex;
  align-items: center;
  justify-content: center;
}

.fdrop i {
  width: 0;
  height: 0;
  border-left: 3.500px solid transparent;
  border-right: 3.500px solid transparent;
  border-top: 6px solid #555;
}

/* encabezados */
.colheads {
  height: 23px;
  flex: none;
  display: flex;
  background: #f7f7f7;
  box-sizing: border-box;
  border-bottom: 1px solid #cfcfcf;
}

.corner {
  width: 24px;
  flex: none;
  box-sizing: border-box;
  border-right: 1px solid #ccc;
  position: relative;
  background: #f4f4f4;
}

.corner i {
  position: absolute;
  right: 2px;
  bottom: 2px;
  width: 0;
  height: 0;
  border-left: 18px solid transparent;
  border-bottom: 16px solid #dedede;
}

.col {
  width: 54.200px;
  flex: none;
  box-sizing: border-box;
  border-right: 1px solid #e2e2e2;
  text-align: center;
  font-size: 10.500px;
  line-height: 23px;
  color: #777;
}

.col.sel {
  width: 68.730px;
  color: #2d7d58;
  background: #efefef;
  border-bottom: 1px solid #2d7d58;
  height: 22.500px;
}

/* hoja */
.sheet {
  height: 679px;
  flex: none;
  display: flex;
  overflow: hidden;
  background: #fff;
}

.rowheads {
  width: 24px;
  flex: none;
  box-sizing: border-box;
  border-right: 1px solid #ccc;
  background: #fbfbfb;
}

.rowh {
  box-sizing: border-box;
  border-bottom: 1px solid #ececec;
  display: flex;
  align-items: flex-end;
  justify-content: center;
  padding-right: 1px;
  font-size: 11px;
  line-height: 10px;
  color: #666;
  overflow: hidden;
}

.content {
  flex: 1;
  font-family: "Liberation Sans", Arial, sans-serif;
}

.banner {
  width: 1031px;
  height: 165px;
  box-sizing: border-box;
  background: #8a1a4b;
  border-bottom: 5px solid #c2185b;
  display: flex;
  flex-direction: column;
  align-items: center;
  padding-top: 49px;
}

.banner-title {
  display: flex;
  align-items: center;
  height: 38px;
  font-size: 31.200px;
  line-height: 38px;
  font-weight: 700;
  color: #ffd700;
  padding-right: 10px;
}

.star {
  font-family: "DejaVu Sans", sans-serif;
  font-size: 36px;
  font-weight: 400;
  margin: 0 17px;
}

.banner-sub {
  margin-top: 55px;
  font-size: 11.350px;
  line-height: 14px;
  font-style: italic;
  color: #f8bbd0;
}

.nav-title {
  width: 1031px;
  height: 22px;
  display: flex;
  align-items: center;
  justify-content: center;
  font-size: 11px;
  font-weight: 700;
  color: #880e4f;
}

.tri-down {
  width: 0;
  height: 0;
  border-left: 4.500px solid transparent;
  border-right: 4.500px solid transparent;
  border-top: 8px solid #880e4f;
  margin-right: 7px;
}

.nav {
  padding-left: 68px;
  display: flex;
  flex-direction: column;
  gap: 19px;
}

.nav-row {
  display: flex;
  width: 894px;
  height: 21.600px;
}

.nav-label {
  width: 275px;
  flex: none;
  box-sizing: border-box;
  border: 1px solid #e2a6c3;
  border-right-color: #f0d4e0;
  display: flex;
  align-items: center;
  padding-left: 2px;
  font-size: 10.500px;
  font-weight: 700;
  color: #fff;
}

.nav-label span {
  margin-left: 5.500px;
  margin-top: -2px;
}

.emoji {
  flex: none;
  margin-top: -5px;
}

.pink-row {
  background: #c2185b;
}

.dark-row {
  background: #8a1a4b;
}

.nav-desc {
  flex: 1;
  box-sizing: border-box;
  border-top: 1px solid #dcd6d8;
  border-bottom: 1px solid #dcd6d8;
  padding-left: 9px;
  display: flex;
  align-items: center;
  font-size: 9.400px;
  letter-spacing: .2px;
  color: #6d5d66;
}

.rose {
  background: #fdeef4;
}

.cream {
  background: #fdf6f0;
}

/* pestañas de hoja */
.tabbar {
  height: 26px;
  flex: none;
  display: flex;
  box-sizing: border-box;
  border-top: 1px solid #d4d4d4;
  border-bottom: 1px solid #cfcfcf;
  background: #f4f4f4;
}

.tab-nav {
  width: 64px;
  flex: none;
  display: flex;
  align-items: center;
  gap: 16px;
  padding-left: 15px;
  box-sizing: border-box;
}

.arr {
  width: 0;
  height: 0;
  border-top: 5px solid transparent;
  border-bottom: 5px solid transparent;
}

.arr.left {
  border-right: 8px solid #bbb;
}

.arr.right {
  border-left: 8px solid #555;
}

.tab-active {
  width: 94px;
  height: 24px;
  flex: none;
  background: #fff;
  box-sizing: border-box;
  padding: 2px 3px 3px 2px;
  box-shadow: 1px 0 0 #ddd;
}

.tab-active span {
  display: flex;
  align-items: center;
  justify-content: center;
  height: 100%;
  background: linear-gradient(180deg, #e6e2e3, #c88ca5);
  font-family: "Liberation Sans", sans-serif;
  font-size: 13px;
  font-weight: 700;
  color: #2e8b5e;
}

.tabs {
  display: flex;
  gap: 7px;
  width: 1266px;
  margin-left: 4px;
  overflow: hidden;
  flex: none;
  padding-top: 3px;
  box-sizing: border-box;
}

.tab {
  height: 21px;
  padding: 0 17px;
  flex: none;
  display: flex;
  align-items: center;
  font-family: "Liberation Sans", sans-serif;
  font-size: 12.200px;
  color: #fff;
  white-space: nowrap;
  box-shadow: 3.500px 0 0 #f4f4f4, 4.500px 0 0 #dcdcdc;
}

.tab.last {
  width: 84px;
  padding: 0 0 0 15px;
  box-sizing: border-box;
  overflow: hidden;
  color: #222;
  box-shadow: none;
  -webkit-mask-image: linear-gradient(90deg, #000 60%, transparent 100%);
  mask-image: linear-gradient(90deg, #000 60%, transparent 100%);
}

.tab-add {
  width: 40px;
  flex: none;
  box-sizing: border-box;
  border-left: 1px solid #dcdcdc;
  border-right: 1px solid #dcdcdc;
  text-align: center;
  font-family: "Liberation Sans", sans-serif;
  font-size: 19px;
  font-weight: 700;
  line-height: 23px;
  color: #555;
}

/* estado */
.status {
  height: 31px;
  flex: none;
  display: flex;
  align-items: center;
  padding: 3px 0 0 26px;
  box-sizing: border-box;
  font-size: 12.500px;
  color: #777;
}

.listo {
  width: 49px;
  flex: none;
}

.a11y {
  margin-right: 4px;
}

.status-right {
  margin-left: auto;
  padding-right: 25px;
  display: flex;
  align-items: center;
}

.view-on {
  width: 32px;
  height: 23px;
  background: #b9b9b9;
  border-radius: 4px;
  display: flex;
  align-items: center;
  justify-content: center;
}

.v-page {
  margin-left: 16px;
}

.v-break {
  margin-left: 22px;
}

.z-minus,
.z-plus {
  width: 9px;
  height: 9px;
  position: relative;
  flex: none;
  background: linear-gradient(#777, #777) center / 9px 1.200px no-repeat;
}

.z-minus {
  margin-left: 18px;
}

.z-plus {
  background:
    linear-gradient(#777, #777) center / 9px 1.200px no-repeat,
    linear-gradient(#777, #777) center / 1.200px 9px no-repeat;
}

.slider {
  width: 104px;
  height: 5px;
  border-radius: 3px;
  background: #acacac;
  margin: 0 7px 0 7px;
  position: relative;
  flex: none;
}

.slider i {
  position: absolute;
  left: 43px;
  top: -6px;
  width: 17px;
  height: 17px;
  border-radius: 50%;
  background: #fff;
  box-shadow: 0 0 2px rgba(0, 0, 0, 0.25);
}

.zoom-val {
  margin-left: 17px;
  letter-spacing: .2px;
}
</style>

<style>
html,
body {
  margin: 0;
  background: #f4f4f4;
}
</style>
